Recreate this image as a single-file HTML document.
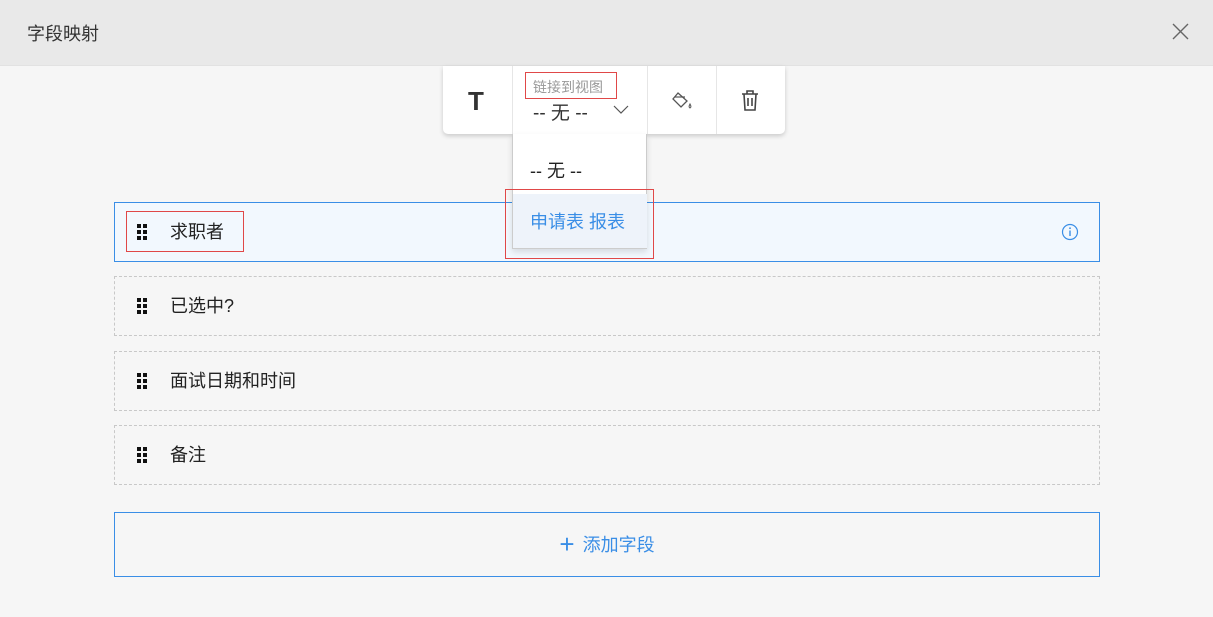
<!DOCTYPE html><html><head><meta charset="utf-8"><style>
*{margin:0;padding:0;box-sizing:border-box}
body{width:1213px;height:617px;background:#f6f6f6;font-family:"Liberation Sans","Noto Sans CJK SC",sans-serif;position:relative;overflow:hidden;color:#222}
.hdr{position:absolute;left:0;top:0;width:1213px;height:66px;background:#e9e9e9;border-bottom:1px solid #e2e2e2}
.hdr span{position:absolute;left:27px;top:20px;font-size:18px;color:#333}
.row{position:absolute;left:114px;width:986px;height:60px;border:1px dashed #c8c8c8}
.row .g{position:absolute;left:22px;top:21px;width:12px;height:17px}
.row .t{position:absolute;left:55px;top:15px;font-size:18px;color:#222}
.dot{position:absolute;width:4px;height:4px;background:#111}
.abs{position:absolute}
</style></head><body>
<div class="hdr"><span>字段映射</span>
<svg class="abs" style="left:1171px;top:22px" width="19" height="19"><path d="M2 2L17 17M17 2L2 17" stroke="#666" stroke-width="1.4"/></svg></div>

<div class="row" style="top:202px;border:1px solid #3a8ee6;background:#f2f8fe"><div class="g"></div><div class="t">求职者</div>
<svg class="abs" style="left:946px;top:20px" width="18" height="18"><circle cx="9" cy="9" r="7.5" fill="none" stroke="#3a8ee6" stroke-width="1.2"/><rect x="8.3" y="7.5" width="1.4" height="5.5" fill="#3a8ee6"/><circle cx="9" cy="5.2" r="0.9" fill="#3a8ee6"/></svg></div>
<div class="abs" style="left:126px;top:211px;width:118px;height:41px;border:1px solid #e04848"></div>
<div class="row" style="top:276px"><div class="g"></div><div class="t">已选中?</div></div>
<div class="row" style="top:351px"><div class="g"></div><div class="t">面试日期和时间</div></div>
<div class="row" style="top:425px"><div class="g"></div><div class="t">备注</div></div>
<div class="abs" style="left:114px;top:512px;width:986px;height:65px;border:1px solid #3a8ee6;color:#3a8ee6;font-size:18px;text-align:center;line-height:63px"><span style="font-size:26px;font-weight:300;vertical-align:-2px;margin-right:8px">+</span>添加字段</div>

<div class="abs" style="left:443px;top:66px;width:342px;height:68px;background:#fff;border-radius:0 0 5px 5px;box-shadow:0 2px 5px rgba(0,0,0,.18)">
<div class="abs" style="left:69px;top:0;width:1px;height:68px;background:#e6e6e6"></div>
<div class="abs" style="left:204px;top:0;width:1px;height:68px;background:#e6e6e6"></div>
<div class="abs" style="left:273px;top:0;width:1px;height:68px;background:#e6e6e6"></div>
<div class="abs" style="left:25px;top:20px;font-size:26px;font-weight:bold;color:#333">T</div>
<div class="abs" style="left:82px;top:6px;width:92px;height:27px;border:1px solid #e04848"></div>
<div class="abs" style="left:90px;top:11px;font-size:14px;color:#999">链接到视图</div>
<div class="abs" style="left:90px;top:32px;font-size:19px;color:#333">-- 无 --</div>
<svg class="abs" style="left:170px;top:39px" width="16" height="10"><path d="M1 1L8 8L15 1" fill="none" stroke="#555" stroke-width="1.2"/></svg>
<svg class="abs" style="left:228px;top:24px" width="24" height="22"><path d="M7 3L16 11L10 17L2 9Z" fill="none" stroke="#555" stroke-width="1.3"/><path d="M4 7L14 7" stroke="#555" stroke-width="1.2"/><path d="M19 14c-1 2-1.5 3 0 4c1.5-1 1-2 0-4z" fill="none" stroke="#555"/></svg>
<svg class="abs" style="left:297px;top:23px" width="20" height="24"><path d="M2 5H18M7 5V2H13V5M4 5L5 21H15L16 5M8 9V17M12 9V17" fill="none" stroke="#444" stroke-width="1.6"/></svg>
</div>

<div class="abs" style="left:512px;top:134px;width:135px;height:115px;background:#fff;border:1px solid #ccc;border-top:none;box-shadow:0 3px 6px rgba(0,0,0,.12)">
<div class="abs" style="left:17px;top:23px;font-size:18px;color:#222">-- 无 --</div>
<div class="abs" style="left:0;top:60px;width:134px;height:54px;background:#eef3fa;color:#3a8ee6;font-size:18px;padding:14px 0 0 17px">申请表 报表</div>
</div>
<div class="abs" style="left:505px;top:189px;width:149px;height:70px;border:1px solid #e04848"></div>

<script>
document.querySelectorAll('.g').forEach(g=>{for(let r=0;r<3;r++)for(let c=0;c<2;c++){let d=document.createElement('div');d.className='dot';d.style.left=c*6+'px';d.style.top=r*6+'px';g.appendChild(d)}});
</script>
</body></html>
